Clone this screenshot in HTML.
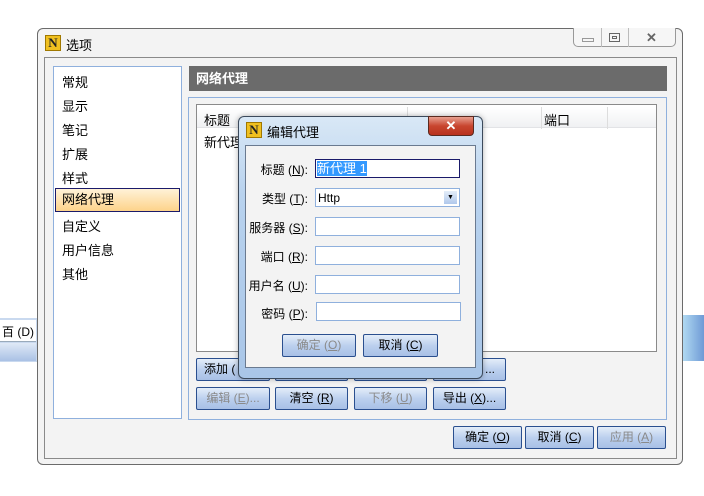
<!DOCTYPE html><html><head><meta charset="utf-8"><style>
*{box-sizing:border-box;margin:0;padding:0}
body{width:704px;height:496px;background:#fff;position:relative;overflow:hidden;font-family:"Liberation Sans","Noto Sans CJK SC",sans-serif;font-size:12px;color:#000}
.a{position:absolute}
.btn{position:absolute;height:23px;border:1px solid #2a4f8f;border-radius:2px;background:linear-gradient(#e4edf9,#bcd0ee 50%,#a8c0e6);text-align:center;line-height:21px;font-size:12px}
.dis{color:#8a8a8a}
.in{position:absolute;height:19px;border:1px solid #8fb0dd;background:#fff}
.lb{position:absolute;width:70px;text-align:right;font-size:12px}
u{text-decoration:underline}
</style></head><body>
<!-- background fragments -->
<div class="a" style="left:0;top:318;top:318px;width:40px;height:44px;background:#c9d9ef"></div>
<div class="a" style="left:0;top:320px;width:36px;height:22px;background:#fff;border-bottom:1px solid #9ab"></div>
<div class="a" style="left:2px;top:323px;font-size:12px">百 (D)</div>
<div class="a" style="left:0;top:343px;width:36px;height:18px;background:linear-gradient(#dfe9f7,#a9c1e5)"></div>
<div class="a" style="left:678px;top:315px;width:26px;height:46px;background:linear-gradient(90deg,#bfe8f8,#6f9ad6)"></div>
<!-- main window -->
<div class="a" style="left:37px;top:28px;width:646px;height:437px;border:1px solid #6b6b6b;border-radius:6px;background:#f3f3f3"></div>
<div class="a" style="left:45px;top:35px;width:16px;height:16px;background:#f0c020;border:1px solid #a07800;font:bold 13px 'Liberation Serif';text-align:center;line-height:14px;color:#222">N</div>
<div class="a" style="left:66px;top:35px;font-size:13px">选项</div>
<div class="a" style="left:573px;top:28px;width:103px;height:19px;border:1px solid #999;border-top:none;border-radius:0 0 5px 5px;background:#f6f6f6"></div>
<div class="a" style="left:601px;top:28px;width:1px;height:19px;background:#bbb"></div>
<div class="a" style="left:628px;top:28px;width:1px;height:19px;background:#bbb"></div>
<div class="a" style="left:582px;top:38px;width:12px;height:4px;border:1px solid #999"></div>
<div class="a" style="left:609px;top:33px;width:11px;height:9px;border:1px solid #666"><div style="margin:2px;height:3px;border:1px solid #666"></div></div>
<div class="a" style="left:646px;top:30px;font-size:13px;color:#666;font-weight:bold">✕</div>
<div class="a" style="left:44px;top:57px;width:633px;height:402px;border:1px solid #8a8a8a;background:#f3f3f3"></div>
<!-- left list -->
<div class="a" style="left:53px;top:66px;width:129px;height:353px;border:1px solid #8fb0dd;background:#fff"></div>
<div class="a" style="left:62px;top:71px;line-height:24px;font-size:13px">常规<br>显示<br>笔记<br>扩展<br>样式</div>
<div class="a" style="left:55px;top:188px;width:125px;height:24px;border:1px solid #1a1a6a;background:linear-gradient(#fff2d8,#fdd38a)"></div>
<div class="a" style="left:62px;top:191px;font-size:13px;line-height:18px">网络代理</div>
<div class="a" style="left:62px;top:215px;line-height:24px;font-size:13px">自定义<br>用户信息<br>其他</div>
<!-- header -->
<div class="a" style="left:189px;top:66px;width:478px;height:25px;background:#6b6b6b;color:#fff;font-weight:bold;font-size:13px;line-height:25px;padding-left:7px">网络代理</div>
<div class="a" style="left:188px;top:97px;width:479px;height:323px;border:1px solid #8fb0dd"></div>
<div class="a" style="left:196px;top:104px;width:461px;height:248px;border:1px solid #8a8a8a;background:#fff"></div>
<div class="a" style="left:197px;top:107px;width:459px;height:21px;background:linear-gradient(#fff,#f0f1f3);border-bottom:1px solid #e2e3e6"></div>
<div class="a" style="left:407px;top:107px;width:1px;height:22px;background:#ddd"></div>
<div class="a" style="left:541px;top:107px;width:1px;height:22px;background:#ddd"></div>
<div class="a" style="left:607px;top:107px;width:1px;height:22px;background:#ddd"></div>
<div class="a" style="left:204px;top:110px;font-size:13px">标题</div>
<div class="a" style="left:544px;top:110px;font-size:13px">端口</div>
<div class="a" style="left:204px;top:132px;font-size:13px">新代理</div>
<div class="btn" style="left:196px;top:358px;width:74px;text-align:left;padding-left:7px">添加 (</div>
<div class="btn" style="left:275px;top:358px;width:73px"></div>
<div class="btn" style="left:354px;top:358px;width:73px"></div>
<div class="btn" style="left:433px;top:358px;width:73px;text-align:right;padding-right:10px">...</div>
<div class="btn dis" style="left:196px;top:387px;width:74px">编辑 (<u>E</u>)...</div>
<div class="btn" style="left:275px;top:387px;width:73px">清空 (<u>R</u>)</div>
<div class="btn dis" style="left:354px;top:387px;width:73px">下移 (<u>U</u>)</div>
<div class="btn" style="left:433px;top:387px;width:73px">导出 (<u>X</u>)...</div>
<div class="btn" style="left:453px;top:426px;width:69px">确定 (<u>O</u>)</div>
<div class="btn" style="left:525px;top:426px;width:69px">取消 (<u>C</u>)</div>
<div class="btn dis" style="left:597px;top:426px;width:69px">应用 (<u>A</u>)</div>
<!-- dialog -->
<div class="a" style="left:238px;top:116px;width:245px;height:263px;border:1px solid #3c4a5c;border-radius:6px;background:linear-gradient(#d9e8f6,#b8d2ee 30%,#a9c6e8);box-shadow:0 0 6px rgba(0,0,0,.3)"></div>
<div class="a" style="left:246px;top:122px;width:16px;height:16px;background:#f0c020;border:1px solid #a07800;font:bold 13px 'Liberation Serif';text-align:center;line-height:14px;color:#222">N</div>
<div class="a" style="left:267px;top:122px;font-size:13px">编辑代理</div>
<div class="a" style="left:428px;top:116px;width:46px;height:20px;border:1px solid #5a2a20;border-radius:0 0 4px 4px;background:linear-gradient(#e8a090,#c8452f 50%,#b8321e);color:#fff;text-align:center;font-weight:bold;font-size:13px;line-height:18px">✕</div>
<div class="a" style="left:245px;top:145px;width:231px;height:223px;border:1px solid #6a7a90;background:#f3f3f3"></div>
<div class="lb" style="left:238px;top:161px">标题 (<u>N</u>):</div>
<div class="in" style="left:315px;top:159px;width:145px;border:1px solid #1a1a6a"><span style="background:#3399ff;color:#fff;margin:1px;display:inline-block;line-height:15px;font-size:13px">新代理 1</span></div>
<div class="lb" style="left:238px;top:190px">类型 (<u>T</u>):</div>
<div class="in" style="left:315px;top:188px;width:145px;padding:1px 2px;line-height:16px">Http<div class="a" style="right:2px;top:2px;width:13px;height:13px;background:linear-gradient(#e4edf9,#b0c8ec);font-size:7px;text-align:center;line-height:13px">▼</div></div>
<div class="lb" style="left:238px;top:219px">服务器 (<u>S</u>):</div>
<div class="in" style="left:315px;top:217px;width:145px"></div>
<div class="lb" style="left:238px;top:248px">端口 (<u>R</u>):</div>
<div class="in" style="left:315px;top:246px;width:145px"></div>
<div class="lb" style="left:238px;top:277px">用户名 (<u>U</u>):</div>
<div class="in" style="left:315px;top:275px;width:145px"></div>
<div class="lb" style="left:238px;top:305px">密码 (<u>P</u>):</div>
<div class="in" style="left:316px;top:302px;width:145px"></div>
<div class="btn dis" style="left:282px;top:334px;width:74px">确定 (<u>O</u>)</div>
<div class="btn" style="left:363px;top:334px;width:75px">取消 (<u>C</u>)</div>
</body></html>
